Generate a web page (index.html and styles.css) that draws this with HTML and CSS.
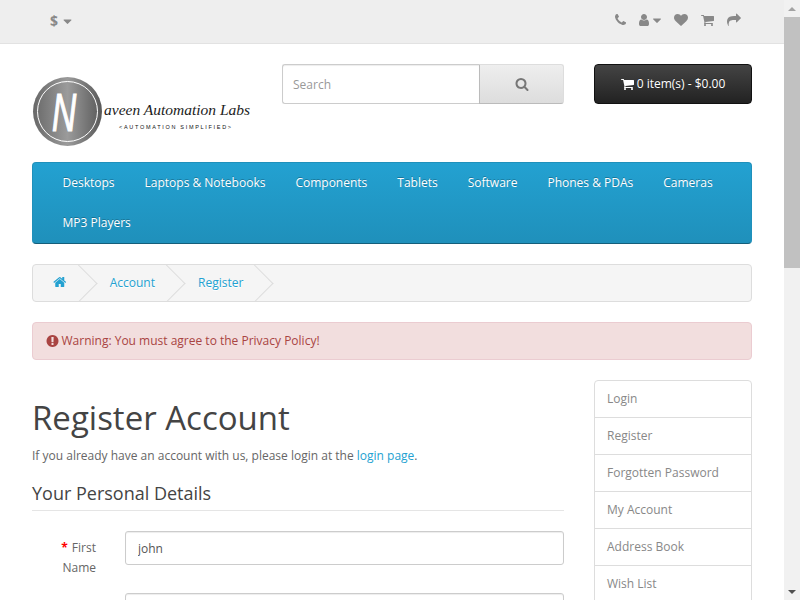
FILE: index.html
```html
<!DOCTYPE html>
<html lang="en">
<head>
<meta charset="utf-8">
<title>Register Account</title>
<link rel="stylesheet" href="styles.css">
</head>
<body>
<svg class="defs" xmlns="http://www.w3.org/2000/svg">
  <symbol id="i-phone" viewBox="0 0 1408 1792"><path d="M1408 1240q0 27-10 70.5t-21 68.5q-21 50-122 106-94 51-186 51-27 0-53-3.500t-57.500-12.500-47-14.500-55.500-20.500-49-18q-98-35-175-83-127-79-264-216t-216-264q-48-77-83-175-3-9-18-49t-20.500-55.500-14.500-47-12.500-57.500-3.500-53q0-92 51-186 56-101 106-122 25-11 68.500-21t70.500-10q14 0 21 3 18 6 53 76 11 19 30 54t35 63.500 31 53.500q3 4 17.500 25t21.500 35.500 7 28.500q0 20-28.500 50t-62 55-62 53-28.500 46q0 9 5 22.500t8.500 20.500 14 24 11.500 19q76 137 174 235t235 174q2 1 19 11.500t24 14 20.500 8.500 22.500 5q18 0 46-28.500t53-62 55-62 50-28.500q14 0 28.500 7t35.500 21.500 25 17.500q25 15 53.500 31t63.500 35 54 30q70 35 76 53 3 7 3 21z"/></symbol>
  <symbol id="i-user" viewBox="256 0 1280 1792"><path d="M1536 1399q0 109-62.500 187t-150.500 78h-854q-88 0-150.500-78t-62.500-187q0-85 8.500-160.500t31.500-152 58.500-131 94-89 134.500-34.500q131 128 313 128t313-128q76 0 134.500 34.500t94 89 58.500 131 31.500 152 8.500 160.500zm-256-887q0 159-112.500 271.500t-271.500 112.500-271.500-112.500-112.500-271.500 112.500-271.500 271.500-112.500 271.500 112.500 112.500 271.500z"/></symbol>
  <symbol id="i-caret" viewBox="384 576 1024 640"><path d="M1408 704q0 26-19 45l-448 448q-19 19-45 19t-45-19l-448-448q-19-19-19-45t19-45 45-19h896q26 0 45 19t19 45z"/></symbol>
  <symbol id="i-heart" viewBox="0 0 1792 1792"><path d="M896 1664q-26 0-44-18l-624-602q-10-8-27.500-26t-55.500-65.500-68-97.500-53.500-121-23.500-138q0-220 127-344t351-124q62 0 126.500 21.500t120 58 95.500 68.500 76 68q36-36 76-68t95.500-68.500 120-58 126.500-21.500q224 0 351 124t127 344q0 221-229 450l-623 600q-18 18-44 18z"/></symbol>
  <symbol id="i-cart" viewBox="0 0 1664 1792"><path d="M640 1536q0 52-38 90t-90 38-90-38-38-90 38-90 90-38 90 38 38 90zm896 0q0 52-38 90t-90 38-90-38-38-90 38-90 90-38 90 38 38 90zm128-1088v512q0 24-16.500 42.500t-40.500 21.500l-1044 122q13 60 13 70 0 16-24 64h920q26 0 45 19t19 45-19 45-45 19h-1024q-26 0-45-19t-19-45q0-11 8-31.500t16-36 21.500-40 15.500-29.500l-177-823h-204q-26 0-45-19t-19-45 19-45 45-19h256q16 0 28.500 6.500t19.500 15.500 13 24.500 8 26 5.500 29.500 4.500 26h1201q26 0 45 19t19 45z"/></symbol>
  <symbol id="i-share" viewBox="0 0 1792 1792"><path d="M1792 640q0 26-19 45l-512 512q-19 19-45 19t-45-19-19-45v-256h-224q-98 0-175.500 6t-154 21.500-133 42.500-105.500 69.500-80 101-48.500 138.500-17.500 181q0 55 5 123 0 6 2.500 23.500t2.500 26.500q0 15-8.500 25t-23.500 10q-16 0-28-17-7-9-13-22t-13.500-30-10.500-24q-127-285-127-451 0-199 53-333 162-403 875-403h224v-256q0-26 19-45t45-19 45 19l512 512q19 19 19 45z"/></symbol>
  <symbol id="i-search" viewBox="0 0 1792 1792"><path d="M1216 832q0-185-131.500-316.500t-316.500-131.500-316.500 131.500-131.500 316.500 131.500 316.500 316.500 131.500 316.500-131.500 131.500-316.500zm512 832q0 52-38 90t-90 38q-54 0-90-38l-343-342q-179 124-399 124-143 0-273.500-55.500t-225-150-150-225-55.500-273.500 55.500-273.500 150-225 225-150 273.500-55.500 273.500 55.500 225 150 150 225 55.500 273.500q0 220-124 399l343 343q37 37 37 90z"/></symbol>
  <symbol id="i-home" viewBox="96 0 1600 1792"><path d="M1472 992v480q0 26-19 45t-45 19h-384v-384h-256v384h-384q-26 0-45-19t-19-45v-480q0-1 .5-3t.5-3l575-474 575 474q1 2 1 6zm223-69l-62 74q-8 9-21 11h-3q-13 0-21-7l-692-577-692 577q-12 8-24 7-13-2-21-11l-62-74q-8-10-7-23.500t11-21.500l719-599q32-26 76-26t76 26l244 204v-195q0-14 9-23t23-9h192q14 0 23 9t9 23v408l219 182q10 8 11 21.500t-7 23.500z"/></symbol>
  <symbol id="i-warn" viewBox="128 0 1536 1792"><path d="M896 128q209 0 385.500 103t279.500 279.500 103 385.500-103 385.500-279.500 279.500-385.500 103-385.500-103-279.500-279.500-103-385.500 103-385.500 279.500-279.500 385.500-103zm128 1247v-190q0-14-9-23.500t-22-9.500h-192q-13 0-23 10t-10 23v190q0 13 10 23t23 10h192q13 0 22-9.500t9-23.500zm-2-344l18-621q0-12-10-18-10-8-24-8h-220q-14 0-24 8-10 6-10 18l17 621q0 10 10 17.500t24 7.500h185q14 0 23.500-7.500t10.500-17.500z"/></symbol>
</svg>
<div class="page">
  <div class="viewport">
    <nav class="top">
      <div class="container top-inner">
        <div class="currency"><strong>$</strong><svg class="ic caret"><use href="#i-caret"/></svg></div>
        <ul class="top-links">
          <li><svg class="ic phone"><use href="#i-phone"/></svg></li>
          <li class="user"><svg class="ic usr"><use href="#i-user"/></svg><svg class="ic caret"><use href="#i-caret"/></svg></li>
          <li><svg class="ic heart"><use href="#i-heart"/></svg></li>
          <li><svg class="ic cart"><use href="#i-cart"/></svg></li>
          <li><svg class="ic share"><use href="#i-share"/></svg></li>
        </ul>
      </div>
    </nav>
    <div class="container">
      <header class="head">
        <a class="logo" href="#">
          <svg class="logo-svg" viewBox="0 0 220 88" xmlns="http://www.w3.org/2000/svg">
            <defs>
              <linearGradient id="disc" x1="0" x2="1" y1="0" y2="0">
                <stop offset="0" stop-color="#686868"/>
                <stop offset=".5" stop-color="#9b9b9b"/>
                <stop offset="1" stop-color="#585858"/>
              </linearGradient>
            </defs>
            <circle cx="35.500" cy="47.500" r="34.500" fill="url(#disc)"/>
            <circle cx="35.500" cy="47.500" r="30" fill="none" stroke="#fff" stroke-width="1"/>
            <text class="logo-n" transform="translate(20 67) scale(1.05 1.65)" x="0" y="0">N</text>
            <text class="logo-name" x="72" y="51">aveen Automation Labs</text>
            <text class="logo-sub" x="87" y="65">&lt;AUTOMATION SIMPLIFIED&gt;</text>
          </svg>
        </a>
        <div class="search">
          <input class="search-input" type="text" placeholder="Search">
          <button class="search-btn" type="button"><svg class="ic search-ic"><use href="#i-search"/></svg></button>
        </div>
        <button class="cart-btn" type="button"><svg class="ic cart-ic"><use href="#i-cart"/></svg><span>0 item(s) - $0.00</span></button>
      </header>
      <nav class="menu">
        <ul class="menu-list">
          <li><a href="#">Desktops</a></li>
          <li><a href="#">Laptops &amp; Notebooks</a></li>
          <li><a href="#">Components</a></li>
          <li><a href="#">Tablets</a></li>
          <li><a href="#">Software</a></li>
          <li><a href="#">Phones &amp; PDAs</a></li>
          <li><a href="#">Cameras</a></li>
          <li><a href="#">MP3 Players</a></li>
        </ul>
      </nav>
      <ul class="breadcrumb">
        <li><a href="#"><svg class="ic home"><use href="#i-home"/></svg></a></li>
        <li><a href="#">Account</a></li>
        <li><a href="#">Register</a></li>
      </ul>
      <div class="alert"><svg class="ic warn"><use href="#i-warn"/></svg> Warning: You must agree to the Privacy Policy!</div>
      <div class="row">
        <main class="content">
          <h1 class="title">Register Account</h1>
          <p class="intro">If you already have an account with us, please login at the <a href="#">login page</a>.</p>
          <form class="form">
            <fieldset class="fields">
              <legend class="legend">Your Personal Details</legend>
              <div class="form-group">
                <label class="label" for="fn"><span class="req">*</span> First Name</label>
                <input class="input" id="fn" type="text" value="john">
              </div>
              <div class="form-group">
                <div class="label"></div>
                <input class="input" type="text" aria-label="Last Name">
              </div>
            </fieldset>
          </form>
        </main>
        <aside class="side">
          <a class="side-item" href="#">Login</a>
          <a class="side-item" href="#">Register</a>
          <a class="side-item" href="#">Forgotten Password</a>
          <a class="side-item" href="#">My Account</a>
          <a class="side-item" href="#">Address Book</a>
          <a class="side-item" href="#">Wish List</a>
        </aside>
      </div>
    </div>
  </div>
  <div class="scrollbar">
    <div class="sb-btn"><span class="sb-up"></span></div>
    <div class="sb-track"><div class="sb-thumb"></div></div>
    <div class="sb-btn"><span class="sb-down"></span></div>
  </div>
</div>
</body>
</html>
```
FILE: styles.css
```css
* { box-sizing: border-box; }
html, body { margin: 0; padding: 0; height: 600px; overflow: hidden; }
body {
  font-family: "Open Sans", sans-serif;
  font-size: 12px;
  line-height: 20px;
  color: #666;
  background: #fff;
}
a { color: #23a1d1; text-decoration: none; }
ul { list-style: none; margin: 0; padding: 0; }
.defs { display: none; }
.ic { display: block; fill: currentColor; flex: none; }

.page { display: flex; height: 600px; }
.viewport { width: 784px; height: 600px; overflow: hidden; flex: none; }
.container { width: 750px; margin: 0 auto; padding: 0 15px; }

/* scrollbar */
.scrollbar { width: 16px; background: #f1f1f1; display: flex; flex-direction: column; flex: none; }
.sb-btn { height: 17px; display: flex; align-items: center; justify-content: center; }
.sb-up, .sb-down { width: 0; height: 0; border-left: 4px solid transparent; border-right: 4px solid transparent; }
.sb-up { border-bottom: 4px solid #a3a3a3; }
.sb-down { border-top: 4px solid #505050; }
.sb-track { flex: 1; }
.sb-thumb { height: 251px; background: #c1c1c1; }

/* top bar */
.top { background: #eee; border-bottom: 1px solid #e2e2e2; height: 44px; margin-bottom: 20px; color: #888; }
.top-inner { display: flex; justify-content: space-between; height: 39px; align-items: center; }
.currency { display: flex; align-items: center; gap: 5px; margin-left: 18px; font-size: 14px; margin-top: 3px; }
.currency .caret { width: 9px; height: 5px; margin-top: 1px; }
.top-links { display: flex; align-items: center; margin-right: 11px; }
.top-links li { margin-left: 13px; display: flex; align-items: center; }
.top-links .user { gap: 4px; }
.phone { width: 11px; height: 14px; }
.usr { width: 10px; height: 14px; }
.top-links .caret { width: 8px; height: 5px; margin-top: 2px; }
.heart { width: 14px; height: 14px; }
.cart { width: 13px; height: 14px; }
.share { width: 14px; height: 14px; }

/* header */
.head { display: grid; grid-template-columns: 220px 282px 158px; column-gap: 30px; align-items: start; }
.logo { display: block; height: 88px; margin-bottom: 10px; }
.logo-svg { display: block; width: 220px; height: 88px; }
.logo-n { font-family: "Liberation Sans", sans-serif; font-size: 32px; font-style: italic; fill: #fff; stroke: #fff; stroke-width: .7px; }
.logo-name { font-family: "Liberation Serif", serif; font-style: italic; font-size: 15.500px; fill: #222; }
.logo-sub { font-family: "Liberation Sans", sans-serif; font-size: 5.500px; letter-spacing: 1.700px; fill: #111; }

.search { display: flex; height: 40px; }
.search-input {
  flex: 1; min-width: 0; height: 40px; padding: 0 10px;
  font: 12px/20px "Open Sans", sans-serif; color: #555;
  border: 1px solid #ccc; border-right: 0; border-radius: 3px 0 0 3px; outline: 0;
  box-shadow: inset 0 1px 1px rgba(0,0,0,.075);
}
.search-input::placeholder { color: #999; opacity: 1; }
.search-btn {
  width: 85px; height: 40px; padding: 0; display: flex; align-items: center; justify-content: center;
  background: linear-gradient(to bottom, #eee, #ddd);
  border: 1px solid #ccc; border-color: #ddd #ddd #bbb #bbb; border-radius: 0 3px 3px 0; color: #777;
}
.search-ic { width: 14px; height: 14px; }

.cart-btn {
  width: 158px; height: 40px; padding: 0; display: flex; align-items: center; justify-content: center; gap: 3px;
  background: linear-gradient(to bottom, #444, #222);
  border: 1px solid #111; border-radius: 4px; color: #fff;
  font: 12px/18px "Open Sans", sans-serif; text-shadow: 0 -1px 0 rgba(0,0,0,.25);
}
.cart-ic { width: 13px; height: 14px; }

/* menu */
.menu {
  background: linear-gradient(to bottom, #23a1d1, #1f90bb);
  border: 1px solid #1f90bb; border-bottom-color: #145e7a; border-radius: 4px;
  margin-bottom: 20px; padding: 0 15px 0 14.500px;
}
.menu-list { display: flex; flex-wrap: wrap; }
.menu-list a { display: block; padding: 10px 15px; color: #fff; text-shadow: 0 -1px 0 rgba(0,0,0,.25); }

/* breadcrumb */
.breadcrumb { height: 38px; padding: 8px 0; border: 1px solid #ddd; border-radius: 4px; background: #f5f5f5; margin-bottom: 20px; overflow: hidden; }
.breadcrumb li { display: inline-block; position: relative; padding: 0 20px; white-space: nowrap; text-shadow: 0 1px 0 #fff; }
.breadcrumb li::after {
  content: ""; display: block; position: absolute; top: -3px; right: -5px;
  width: 26px; height: 26px; border-right: 1px solid #ddd; border-bottom: 1px solid #ddd; transform: rotate(-45deg);
}
.breadcrumb a { display: inline-block; vertical-align: top; }
.home { width: 13.500px; height: 14px; margin-top: 2px; }

/* alert */
.alert { display: flex; align-items: center; gap: 2.500px; height: 38px; padding: 8px 14px 8px 13px; margin-bottom: 20px; background: #f2dede; border: 1px solid #ebccd1; border-radius: 4px; color: #a94442; }
.warn { width: 13px; height: 14px; }

/* content */
.row { display: grid; grid-template-columns: 532px 158px; column-gap: 30px; align-items: start; }
.title { margin: 20px 0 10px; font-size: 33px; font-weight: 400; line-height: 36px; color: #444; }
.intro { margin: 0 0 10px; }
.fields { border: 0; margin: 0; padding: 0; min-width: 0; }
.legend { display: block; width: 100%; padding: 7px 0; margin: 0 0 20px; font-size: 18px; line-height: 20px; color: #444; border-bottom: 1px solid #e5e5e5; }
.form-group { display: flex; gap: 29px; align-items: flex-start; margin-bottom: 15px; }
.label { width: 64px; flex: none; padding-top: 7px; text-align: right; line-height: 20px; }
.req { color: #f00; font-weight: 700; margin-right: 1px; }
.input {
  flex: 1; min-width: 0; height: 34px; padding: 6px 12px;
  font: 12px/20px "Open Sans", sans-serif; color: #555;
  border: 1px solid #ccc; border-radius: 3px; outline: 0;
  box-shadow: inset 0 1px 1px rgba(0,0,0,.075);
}

/* sidebar */
.side { display: block; border: 1px solid #ddd; border-radius: 4px; }
.side-item { display: block; padding: 8px 12px; color: #888; border-bottom: 1px solid #ddd; height: 37px; }
```
